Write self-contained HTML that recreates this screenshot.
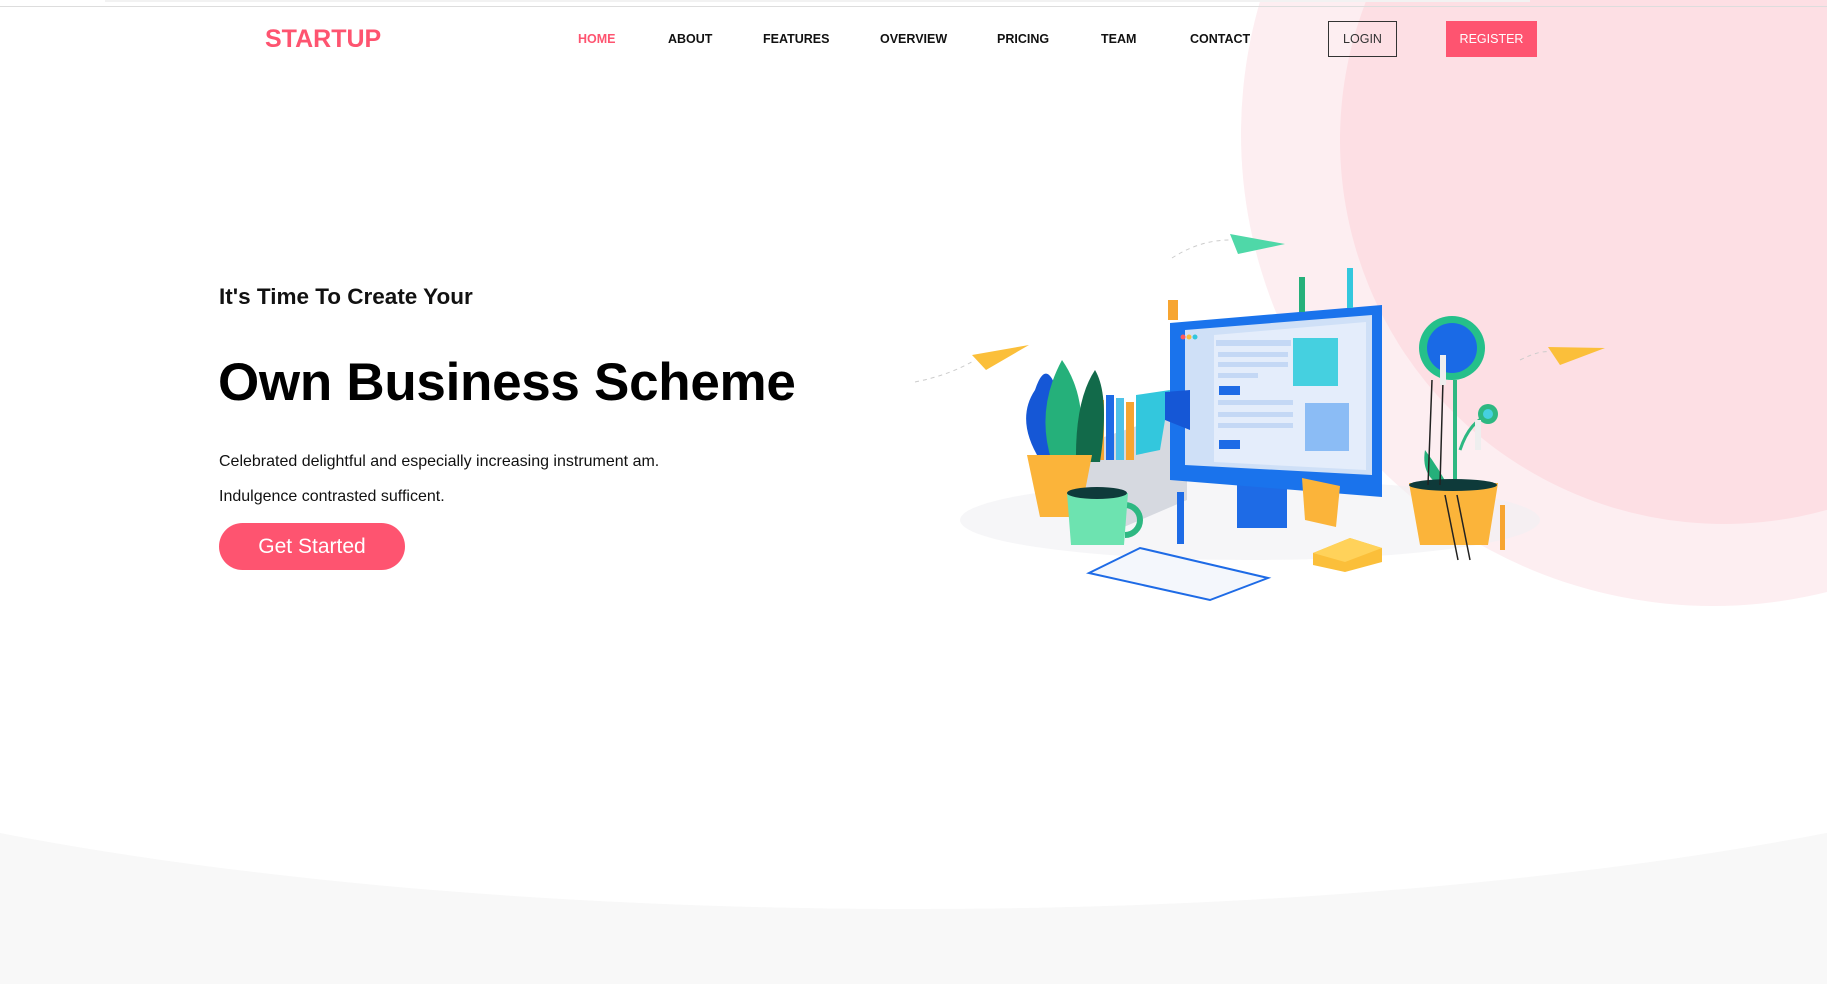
<!DOCTYPE html>
<html><head><meta charset="utf-8"><style>
*{margin:0;padding:0;box-sizing:border-box}
html,body{width:1827px;height:984px;overflow:hidden;background:#fff;font-family:"Liberation Sans",Arial,sans-serif;position:relative}
.abs{position:absolute}
.nav a{position:absolute;top:31px;font-size:12.5px;font-weight:bold;color:#111;text-decoration:none;line-height:16px}
</style></head><body>
<div class="abs" style="left:0;top:0;width:1827px;height:984px;overflow:hidden">
  <div class="abs" style="left:1241px;top:-338px;width:944px;height:944px;border-radius:50%;background:#fdeef1"></div>
  <div class="abs" style="left:1340px;top:-244px;width:768px;height:768px;border-radius:50%;background:#fddfe4"></div>
  <div class="abs" style="left:0;top:833px;width:1827px;height:151px;background:#f8f8f8"></div>
  <div class="abs" style="left:-487px;top:281px;width:2800px;height:628px;border-radius:50%;background:#fff;clip-path:inset(552px 0 0 0)"></div>
</div>
<div class="abs" style="left:0;top:6px;width:1827px;height:1px;background:#ddd"></div>
<div class="abs" style="left:105px;top:0;width:1425px;height:2px;background:#f2f2f2"></div>
<div class="abs" style="left:265px;top:25px;font-size:25px;font-weight:bold;color:#fe5470">STARTUP</div>
<div class="nav">
<a style="left:578px;color:#fe5470">HOME</a>
<a style="left:668px">ABOUT</a>
<a style="left:763px">FEATURES</a>
<a style="left:880px">OVERVIEW</a>
<a style="left:997px">PRICING</a>
<a style="left:1101px">TEAM</a>
<a style="left:1190px">CONTACT</a>
</div>
<div class="abs" style="left:1328px;top:21px;width:69px;height:36px;border:1px solid #333;font-size:12.5px;color:#333;text-align:center;line-height:34px">LOGIN</div>
<div class="abs" style="left:1446px;top:21px;width:91px;height:36px;background:#fe5470;font-size:12.5px;color:#fff;text-align:center;line-height:36px">REGISTER</div>

<div class="abs" style="left:219px;top:284px;font-size:22.5px;font-weight:bold;color:#111">It's Time To Create Your</div>
<div class="abs" style="left:218px;top:352px;font-size:53px;font-weight:bold;color:#000;letter-spacing:-0.3px">Own Business Scheme</div>
<div class="abs" style="left:219px;top:453px;font-size:16px;color:#111">Celebrated delightful and especially increasing instrument am.</div>
<div class="abs" style="left:219px;top:488px;font-size:16px;color:#111">Indulgence contrasted sufficent.</div>
<div class="abs" style="left:219px;top:523px;width:186px;height:47px;border-radius:24px;background:#fe5470;color:#fff;font-size:21px;text-align:center;line-height:47px">Get Started</div>

<svg class="abs" style="left:0;top:0" width="1827" height="984" viewBox="0 0 1827 984">
 <path d="M1172 258 Q1200 240 1230 240" stroke="#ccc" stroke-dasharray="4 4" fill="none"/>
 <path d="M915 382 Q950 375 975 360" stroke="#ccc" stroke-dasharray="4 4" fill="none"/>
 <path d="M1520 360 Q1540 350 1550 352" stroke="#ccc" stroke-dasharray="4 4" fill="none"/>
 <polygon points="1230,234 1285,244 1238,254" fill="#4fd8a8"/>
 <polygon points="972,355 1029,345 986,370" fill="#fbbf3a"/>
 <polygon points="1548,347 1605,348 1560,365" fill="#fbbf3a"/>
 <ellipse cx="1250" cy="520" rx="290" ry="40" fill="#f0f0f3" opacity=".6"/>
 <polygon points="1086,443 1140,425 1187,390 1187,500 1110,533 1086,520" fill="#d6d9e0"/>
 <rect x="1096" y="400" width="8" height="60" fill="#f7a531"/>
 <rect x="1106" y="395" width="8" height="65" fill="#1e6be6"/>
 <rect x="1116" y="398" width="8" height="62" fill="#4fc3e8"/>
 <rect x="1126" y="402" width="8" height="58" fill="#f7a531"/>
 <polygon points="1136,395 1170,390 1160,450 1136,455" fill="#33c7dd"/>
 <path d="M1040 460 Q1015 420 1035 390 Q1045 360 1055 385 Q1075 420 1060 460Z" fill="#1557d6"/>
 <path d="M1052 462 Q1035 410 1062 360 Q1090 400 1078 462Z" fill="#25b07a"/>
 <path d="M1076 462 Q1075 400 1095 370 Q1110 395 1100 462Z" fill="#126a4a"/>
 <polygon points="1027,455 1092,455 1080,517 1040,517" fill="#fbb43a"/>
 <path d="M1125 505 a15 15 0 1 1 0 30" stroke="#2eb882" stroke-width="6" fill="none"/>
 <path d="M1067 493 L1128 493 L1124 545 L1071 545Z" fill="#6de3b0"/>
 <ellipse cx="1097" cy="493" rx="30" ry="6" fill="#0e3a3a"/>
 <rect x="1237" y="470" width="50" height="58" fill="#1e6be6"/>
 <polygon points="1170,323 1382,305 1382,497 1170,480" fill="#1a73ec"/>
 <polygon points="1185,330 1372,315 1372,475 1185,465" fill="#cfe0f7"/>
 <polygon points="1214,335 1366,322 1366,470 1214,462" fill="#e4edfb"/>
 <circle cx="1183" cy="337" r="2.5" fill="#ff5a5a"/><circle cx="1189" cy="337" r="2.5" fill="#fbbf3a"/><circle cx="1195" cy="337" r="2.5" fill="#33c7dd"/>
 <rect x="1216" y="340" width="75" height="6" fill="#c4d8f5"/>
 <rect x="1218" y="352" width="70" height="5" fill="#c4d8f5"/>
 <rect x="1218" y="362" width="70" height="5" fill="#c4d8f5"/>
 <rect x="1218" y="373" width="40" height="5" fill="#c4d8f5"/>
 <rect x="1219" y="386" width="21" height="9" fill="#1e6be6"/>
 <rect x="1293" y="338" width="45" height="48" fill="#45d0e0"/>
 <rect x="1218" y="400" width="75" height="5" fill="#c4d8f5"/>
 <rect x="1218" y="412" width="75" height="5" fill="#c4d8f5"/>
 <rect x="1218" y="423" width="75" height="5" fill="#c4d8f5"/>
 <rect x="1219" y="440" width="21" height="9" fill="#1e6be6"/>
 <rect x="1305" y="403" width="44" height="48" fill="#8bbcf5"/>
 <polygon points="1165,392 1190,390 1190,430 1165,420" fill="#1557d6"/>
 <polygon points="1302,478 1340,486 1336,527 1305,520" fill="#fbb43a"/>
 <polygon points="1313,553 1350,538 1382,548 1382,562 1345,572 1313,565" fill="#fbbf3a"/>
 <polygon points="1313,553 1345,562 1382,548 1350,538" fill="#ffd25a"/>
 <polygon points="1089,573 1140,548 1268,578 1210,600" fill="#f4f7fc" stroke="#1e6be6" stroke-width="2"/>
 <path d="M1455 380 L1455 490" stroke="#2eb882" stroke-width="4"/>
 <path d="M1460 450 Q1470 420 1490 415" stroke="#2eb882" stroke-width="3" fill="none"/>
 <ellipse cx="1452" cy="348" rx="33" ry="32" fill="#25c08a"/>
 <ellipse cx="1452" cy="348" rx="25" ry="25" fill="#1a6ae6"/>
 <circle cx="1488" cy="414" r="10" fill="#2eb882"/><circle cx="1488" cy="414" r="5" fill="#45d0e0"/>
 <path d="M1425 450 Q1440 470 1450 490 Q1420 480 1425 450Z" fill="#25b07a"/>
 <polygon points="1409,483 1498,483 1488,545 1420,545" fill="#fbb43a"/>
 <ellipse cx="1453" cy="485" rx="44" ry="6" fill="#0e3a3a"/>
 <path d="M1432 380 L1428 485 M1443 380 L1440 485 M1445 495 L1458 560 M1457 495 L1470 560" stroke="#222" stroke-width="1.5"/>
 <rect x="1299" y="277" width="6" height="35" fill="#25b07a"/>
 <rect x="1347" y="268" width="6" height="40" fill="#33c7dd"/>
 <rect x="1168" y="300" width="10" height="20" fill="#f7a531"/>
 <rect x="1177" y="492" width="7" height="52" fill="#1e6be6"/>
 <rect x="1440" y="355" width="6" height="30" fill="#eee"/>
 <rect x="1475" y="420" width="6" height="30" fill="#eee"/>
 <rect x="1500" y="505" width="5" height="45" fill="#f7a531"/>
</svg>
</body></html>
